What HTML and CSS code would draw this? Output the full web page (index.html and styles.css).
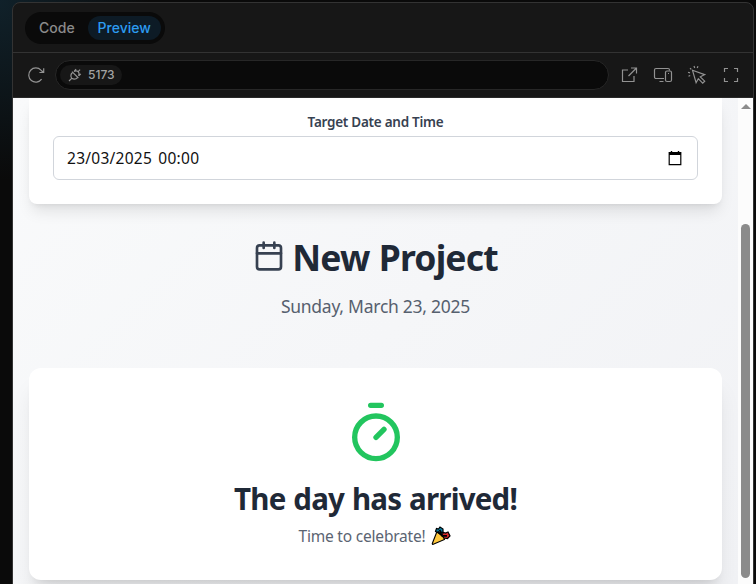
FILE: index.html
```html
<!DOCTYPE html>
<html lang="en">
<head>
<meta charset="utf-8">
<title>Preview</title>
<link rel="stylesheet" href="styles.css">
</head>
<body>
<main class="panel">
  <header class="tabs">
    <div class="switch"><button class="tab">Code</button><button class="tab active">Preview</button></div>
  </header>
  <div class="toolbar">
    <svg class="reload" width="18" height="18" viewBox="0 0 18 18"><path d="M14.600 13.200A7.100 7.100 0 1 1 14 4.200L16.300 6.300M16.700 2.200v4.300h-4.300"/></svg>
    <div class="address">
      <div class="port">
        <svg width="14" height="14" viewBox="0 0 14 14"><path d="M1 13l2.700-2.700M8.100 1.200 6.200 3.200M12.800 5.900l-2 2M4 3.600l6.400 6.400M4.700 4.200C2.800 6 2.400 8.200 3.700 10.300c2.200 1.300 4.400.9 6.100-.9M5.900 3.500c1.500-.9 3.100-.9 4.200.2s1.200 2.800.5 4.300M10.100 3.700l2-2"/></svg>
        <span>5173</span>
      </div>
    </div>
    <div class="actions">
      <svg width="18" height="18" viewBox="0 0 18 18"><path d="M8 4H2.500v11.500H14V10M11 2h5.500v5.500M16.500 2l-8 8"/></svg>
      <svg width="20" height="18" viewBox="0 0 20 18"><path d="M16.500 4.500V4A1.500 1.500 0 0 0 15 2.500H3A1.500 1.500 0 0 0 1.500 4v7A1.500 1.500 0 0 0 3 12.500h8M6.500 15.500h4"/><rect x="12.500" y="5" width="6" height="10.500" rx="1.500"/><path d="M15 7.500h1"/></svg>
      <svg width="20" height="20" viewBox="0 0 20 20"><path d="M5.500 5.300 17.700 9.600l-4.400 2.200 4.400 4.400-2 2-4.400-4.500-2.200 4zM7 1l.7 2M11 1.300l-.8 1.800M1 7.300l2 .6M1.500 11.300l1.700-.8M3 3.300l1.200 1"/></svg>
      <svg width="16" height="16" viewBox="0 0 16 16"><path d="M1.500 5V1.500H5M11 1.500h3.500V5M14.500 11v3.500H11M5 14.500H1.500V11"/></svg>
    </div>
  </div>
  <div class="viewport">
    <div class="page">
      <section class="card form">
        <label class="label"><span>Target Date and Time</span></label>
        <div class="field">
          <span class="value">23/03/2025 00:00</span>
          <svg width="14" height="15" viewBox="0 0 14 15"><path d="M3.500 0v2M10.500 0v2M1.600 3.200h10.800" stroke="#000" stroke-width="1.400"/><path d="M1.200 1.700h11.600v11.900H1.200z" fill="none" stroke="#000" stroke-width="1.200"/><path d="M1 1h12v3H1z"/></svg>
        </div>
      </section>
      <div class="heading">
        <svg width="32" height="32" viewBox="0 0 24 24"><rect x="3" y="4" width="18" height="18" rx="2"/><path d="M8 2v4M16 2v4M3 10h18"/></svg>
        <h1>New Project</h1>
      </div>
      <p class="date"><span>Sunday, March 23, 2025</span></p>
      <section class="card result">
        <svg class="timer" width="64" height="64" viewBox="0 0 24 24"><path d="M10 2h4M12 14l3-3"/><circle cx="12" cy="14" r="8"/></svg>
        <h2>The day has arrived!</h2>
        <p class="celebrate"><span>Time to celebrate!</span>
          <svg width="20" height="20" viewBox="0 0 20 20"><path d="M6 5.500 1.300 17.500c-.2.800.3 1 1 .800L13.500 13.500c-1-3.700-3.700-6.600-7.500-8z" fill="#ffc83d" stroke="#000" stroke-width="1.100"/><path d="M4.500 5.500 5.500 2.500 7.500 3l1.500-2 3 2 0 3-2.500 2z" fill="#087fa3" stroke="#000" stroke-width="1.200"/><path d="M10.500 9.500 12.500 6.500l2 .5L17 6l2 4-2.500 2.500-3.500-.5z" fill="#d92c2c" stroke="#000" stroke-width="1.200"/><path d="M6.500 5.500l5 4.500M12 9.800h4M8.500 4l2 3" stroke="#000" stroke-width="1.700"/></svg>
        </p>
      </section>
    </div>
    <div class="scrollbar"><i class="arrow"></i><i class="thumb"></i></div>
  </div>
</main>
</body>
</html>
```
FILE: styles.css
```css
* { box-sizing: border-box; }
body {
  margin: 0; width: 756px; height: 584px; overflow: hidden;
  padding: 2px 2px 0 12px;
  background: radial-gradient(ellipse 150px 180px at 0 0, #10212a, #0a0a0a) #0a0a0a;
  font-family: "Noto Sans", "Open Sans", sans-serif;
}
h1, h2, p { margin: 0; }
svg { flex: none; display: block; }
.panel {
  width: 742px; height: 590px; overflow: hidden;
  display: flex; flex-direction: column;
  background: #171717; border: 1px solid #333; border-radius: 8px 8px 0 0;
}
.tabs { height: 50px; flex: none; border-bottom: 1px solid #333; padding: 9px 12px; }
.switch {
  display: flex; align-items: center; width: 140px; height: 32px; padding: 4px;
  border-radius: 16px; background: #0a0a0a;
}
.tab {
  border: 0; padding: 0 10px; height: 24px; border-radius: 12px; background: none; color: #8b8b8b;
  font: 500 14px/24px Inter, sans-serif;
}
.tab.active { background: #0d1b26; color: #2c9cf2; margin-left: 3px; }
.toolbar { height: 45px; flex: none; border-bottom: 1px solid #292929; display: flex; align-items: center; padding: 0 0 0 14px; }
.toolbar svg { fill: none; stroke: #929292; stroke-width: 1.2; }
.address {
  flex: none; width: 554px; height: 30px; margin-left: 10px; padding: 4px; border: 1px solid #272727;
  border-radius: 15px; background: #0a0a0a;
}
.port {
  display: flex; align-items: center; gap: 6px; width: 62px; height: 20px; padding-left: 8px;
  border-radius: 10px; background: #171717; color: #a3a3a3; font: 500 12px/20px Inter, sans-serif;
}
.actions { display: grid; grid-template-columns: repeat(4, 34px); align-items: center; justify-items: center; margin-left: 3px; }
.viewport { flex: 1; min-height: 0; display: flex; }
.page {
  width: 725px; padding: 0 16px; overflow: hidden;
  background: linear-gradient(135deg, #f9fafb, #f1f2f5);
}
.card { background: #fff; box-shadow: 0 10px 15px -3px rgba(0,0,0,.1), 0 4px 6px -4px rgba(0,0,0,.1); }
.form { height: 106px; border-radius: 0 0 8px 8px; padding: 14px 24px 24px; }
.label { display: flex; justify-content: center; height: 20px; margin-bottom: 4px; font-size: 13.5px; line-height: 20px; font-weight: 600; color: #374151; letter-spacing: -.26px; }
.field {
  display: flex; align-items: center; justify-content: space-between; height: 44px;
  border: 1px solid #d1d5db; border-radius: 6px; padding: 0 15px 0 13px; font-size: 15.5px; color: #111;
}
.value { letter-spacing: .26px; word-spacing: 2px; }
.heading { display: flex; justify-content: center; align-items: center; gap: 7px; height: 40px; margin-top: 34px; }
.heading svg { fill: none; stroke: #374151; stroke-width: 2; stroke-linecap: round; stroke-linejoin: round; margin-top: -5px; }
h1 { margin-top: -3px; font-size: 35.5px; line-height: 40px; font-weight: 700; color: #1f2937; letter-spacing: -.85px; word-spacing: 1px; white-space: nowrap; }
.date { text-align: center; margin-top: 14px; height: 28px; font-size: 17.5px; line-height: 28px; color: #56606e; letter-spacing: -.26px; }
.result {
  margin-top: 48px; height: 212px; border-radius: 12px; padding-top: 32px;
  display: flex; flex-direction: column; align-items: center;
  box-shadow: 0 20px 25px -5px rgba(0,0,0,.1), 0 8px 10px -6px rgba(0,0,0,.1);
}
.timer { fill: none; stroke: #22c55e; stroke-width: 2; stroke-linecap: round; stroke-linejoin: round; }
h2 { margin-top: 17px; font-size: 29.5px; line-height: 36px; font-weight: 700; color: #1f2937; letter-spacing: -.8px; word-spacing: 1px; white-space: nowrap; }
.celebrate { display: flex; align-items: center; gap: 5px; margin: 7px 2px 0 0; font-size: 15.5px; line-height: 24px; color: #5b6472; letter-spacing: -.2px; }
.scrollbar { width: 15px; background: #fcfcfc; display: flex; flex-direction: column; align-items: center; }
.arrow { margin-top: 6px; border: 5px solid transparent; border-top: 0; border-bottom: 5px solid #8b8b8b; }
.thumb { width: 9px; height: 354px; margin-top: 115px; border-radius: 5px; background: #8b8b8b; }
```
